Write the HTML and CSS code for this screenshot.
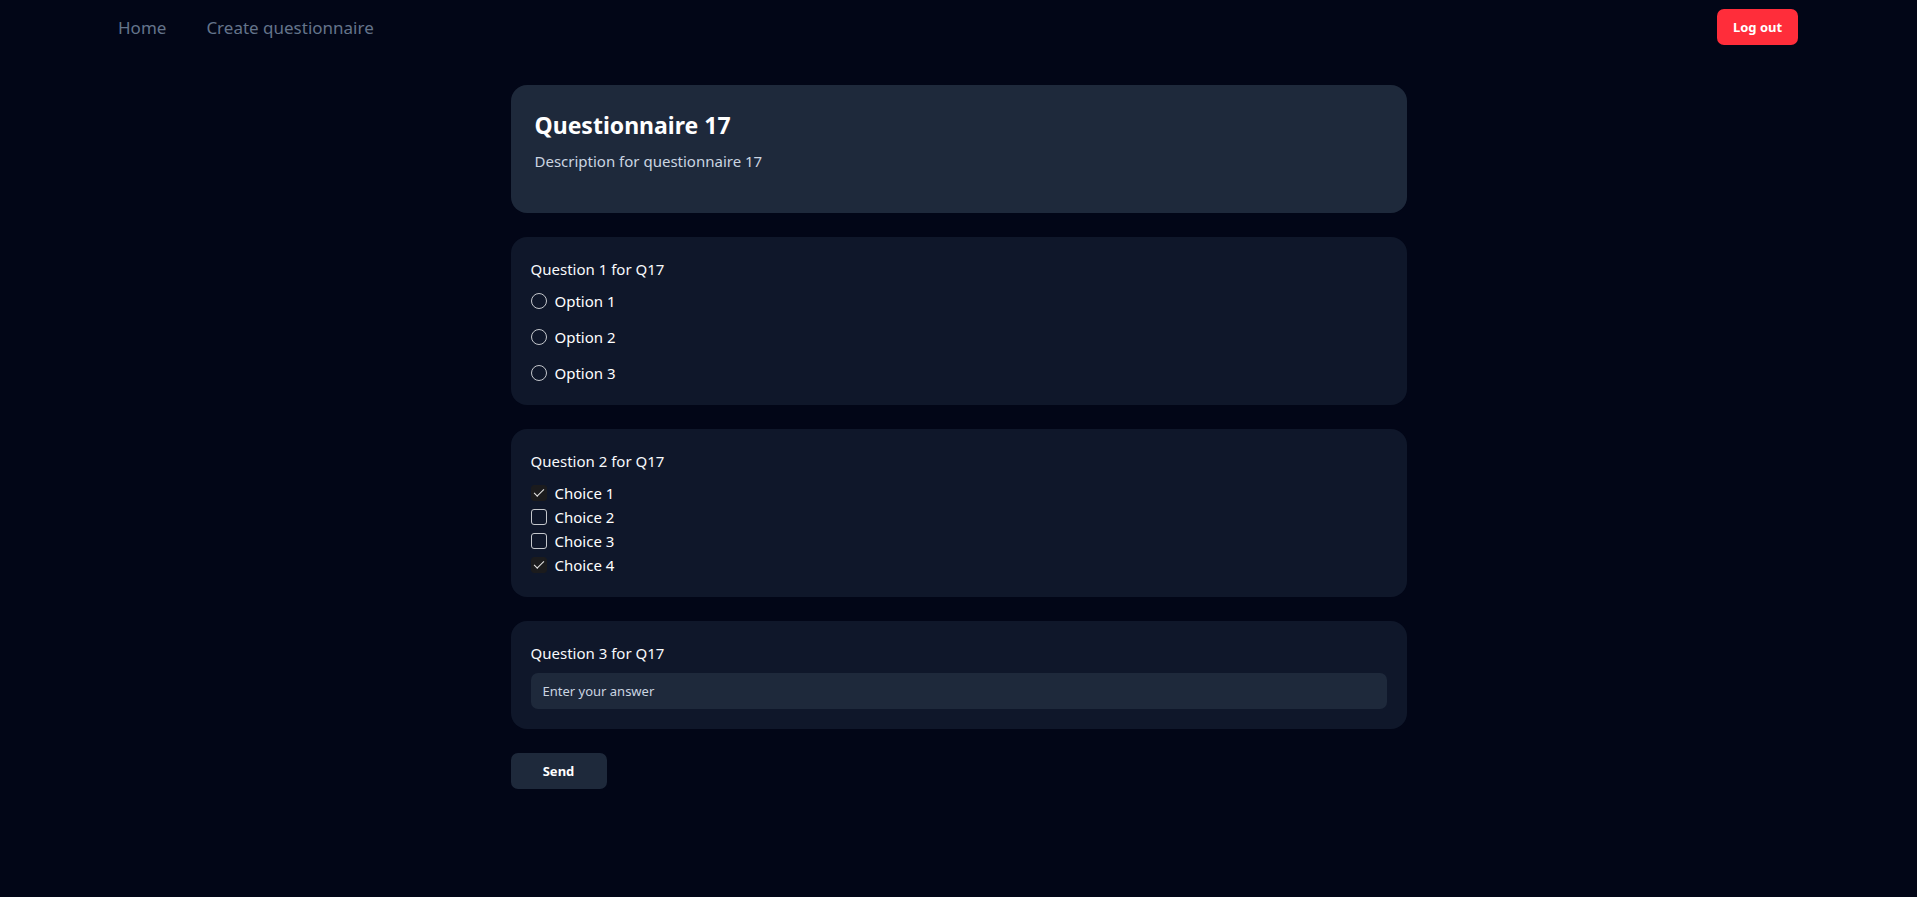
FILE: index.html
```html
<!DOCTYPE html>
<html lang="en">
<head>
<meta charset="utf-8">
<title>Questionnaire 17</title>
<link rel="stylesheet" href="styles.css">
</head>
<body>
<nav class="nav">
  <div class="nav-links">
    <a class="nav-link" href="#">Home</a>
    <a class="nav-link" href="#">Create questionnaire</a>
  </div>
  <button class="logout">Log out</button>
</nav>
<main class="main">
  <section class="header-card">
    <h1 class="title">Questionnaire 17</h1>
    <p class="desc">Description for questionnaire 17</p>
  </section>

  <section class="q-card">
    <p class="q-label">Question 1 for Q17</p>
    <div class="radio-list">
      <label class="opt"><input type="radio" name="q1" class="radio"><span>Option 1</span></label>
      <label class="opt"><input type="radio" name="q1" class="radio"><span>Option 2</span></label>
      <label class="opt"><input type="radio" name="q1" class="radio"><span>Option 3</span></label>
    </div>
  </section>

  <section class="q-card">
    <p class="q-label">Question 2 for Q17</p>
    <div class="check-list">
      <label class="opt"><input type="checkbox" class="check" checked><span>Choice 1</span></label>
      <label class="opt"><input type="checkbox" class="check"><span>Choice 2</span></label>
      <label class="opt"><input type="checkbox" class="check"><span>Choice 3</span></label>
      <label class="opt"><input type="checkbox" class="check" checked><span>Choice 4</span></label>
    </div>
  </section>

  <section class="q-card">
    <p class="q-label">Question 3 for Q17</p>
    <input class="answer" type="text" placeholder="Enter your answer">
  </section>

  <div class="actions">
    <button class="send">Send</button>
  </div>
</main>
</body>
</html>
```
FILE: styles.css
```css
* { box-sizing: border-box; }
html, body {
  margin: 0;
  padding: 0;
  background: #020617;
  font-family: "Noto Sans", "Open Sans", sans-serif;
  color: #f1f5f9;
}
.nav {
  display: flex;
  align-items: center;
  justify-content: space-between;
  height: 54px;
  padding: 0 119px 0 118px;
}
.nav-links {
  display: flex;
  gap: 40px;
}
.nav-link {
  color: #64748b;
  text-decoration: none;
  font-size: 17px;
}
.logout {
  background: #ff2d3a;
  color: #fff;
  border: none;
  border-radius: 7px;
  height: 36px;
  width: 81px;
  font-family: inherit;
  font-weight: 700;
  font-size: 13px;
}
.main {
  width: 896px;
  margin: 31px auto 0;
  display: flex;
  flex-direction: column;
  gap: 24px;
}
.header-card {
  background: #1e293b;
  border-radius: 16px;
  padding: 24px 24px 40px;
}
.title {
  margin: 0;
  font-size: 23px;
  line-height: 32px;
  font-weight: 700;
  color: #fff;
}
.desc {
  margin: 8px 0 0;
  font-size: 15px;
  line-height: 24px;
  color: #cbd5e1;
}
.q-card {
  background: #0f172a;
  border-radius: 16px;
  padding: 20px;
}
.q-label {
  margin: 0 0 8px;
  font-size: 15px;
  line-height: 24px;
  color: #f8fafc;
}
.radio-list {
  display: flex;
  flex-direction: column;
  gap: 12px;
}
.check-list {
  display: flex;
  flex-direction: column;
}
.opt {
  display: flex;
  align-items: center;
  gap: 8px;
  font-size: 15px;
  line-height: 24px;
  color: #fff;
}
.radio {
  appearance: none;
  margin: 0;
  width: 16px;
  height: 16px;
  border: 1px solid #c4c7cc;
  border-radius: 50%;
  background: transparent;
}
.check {
  appearance: none;
  margin: 0;
  width: 16px;
  height: 16px;
  border: 1px solid #c4c7cc;
  border-radius: 3px;
  background: transparent;
  position: relative;
}
.check:checked {
  background: #1b1b1d;
  border-color: #1b1b1d;
}
.check:checked::after {
  content: "";
  position: absolute;
  left: 2px;
  top: 3px;
  width: 9px;
  height: 4px;
  border-left: 1.2px solid #e6e6e6;
  border-bottom: 1.2px solid #e6e6e6;
  transform: rotate(-45deg);
}
.answer {
  display: block;
  width: 100%;
  height: 36px;
  border: none;
  border-radius: 7px;
  background: #1e293b;
  padding: 0 12px;
  font-family: inherit;
  font-size: 13px;
  color: #fff;
  outline: none;
}
.answer::placeholder {
  color: #cbd5e1;
}
.actions {
  display: flex;
}
.send {
  width: 96px;
  height: 36px;
  background: #1e293b;
  color: #fff;
  border: none;
  border-radius: 7px;
  font-family: inherit;
  font-weight: 700;
  font-size: 13px;
}
```
